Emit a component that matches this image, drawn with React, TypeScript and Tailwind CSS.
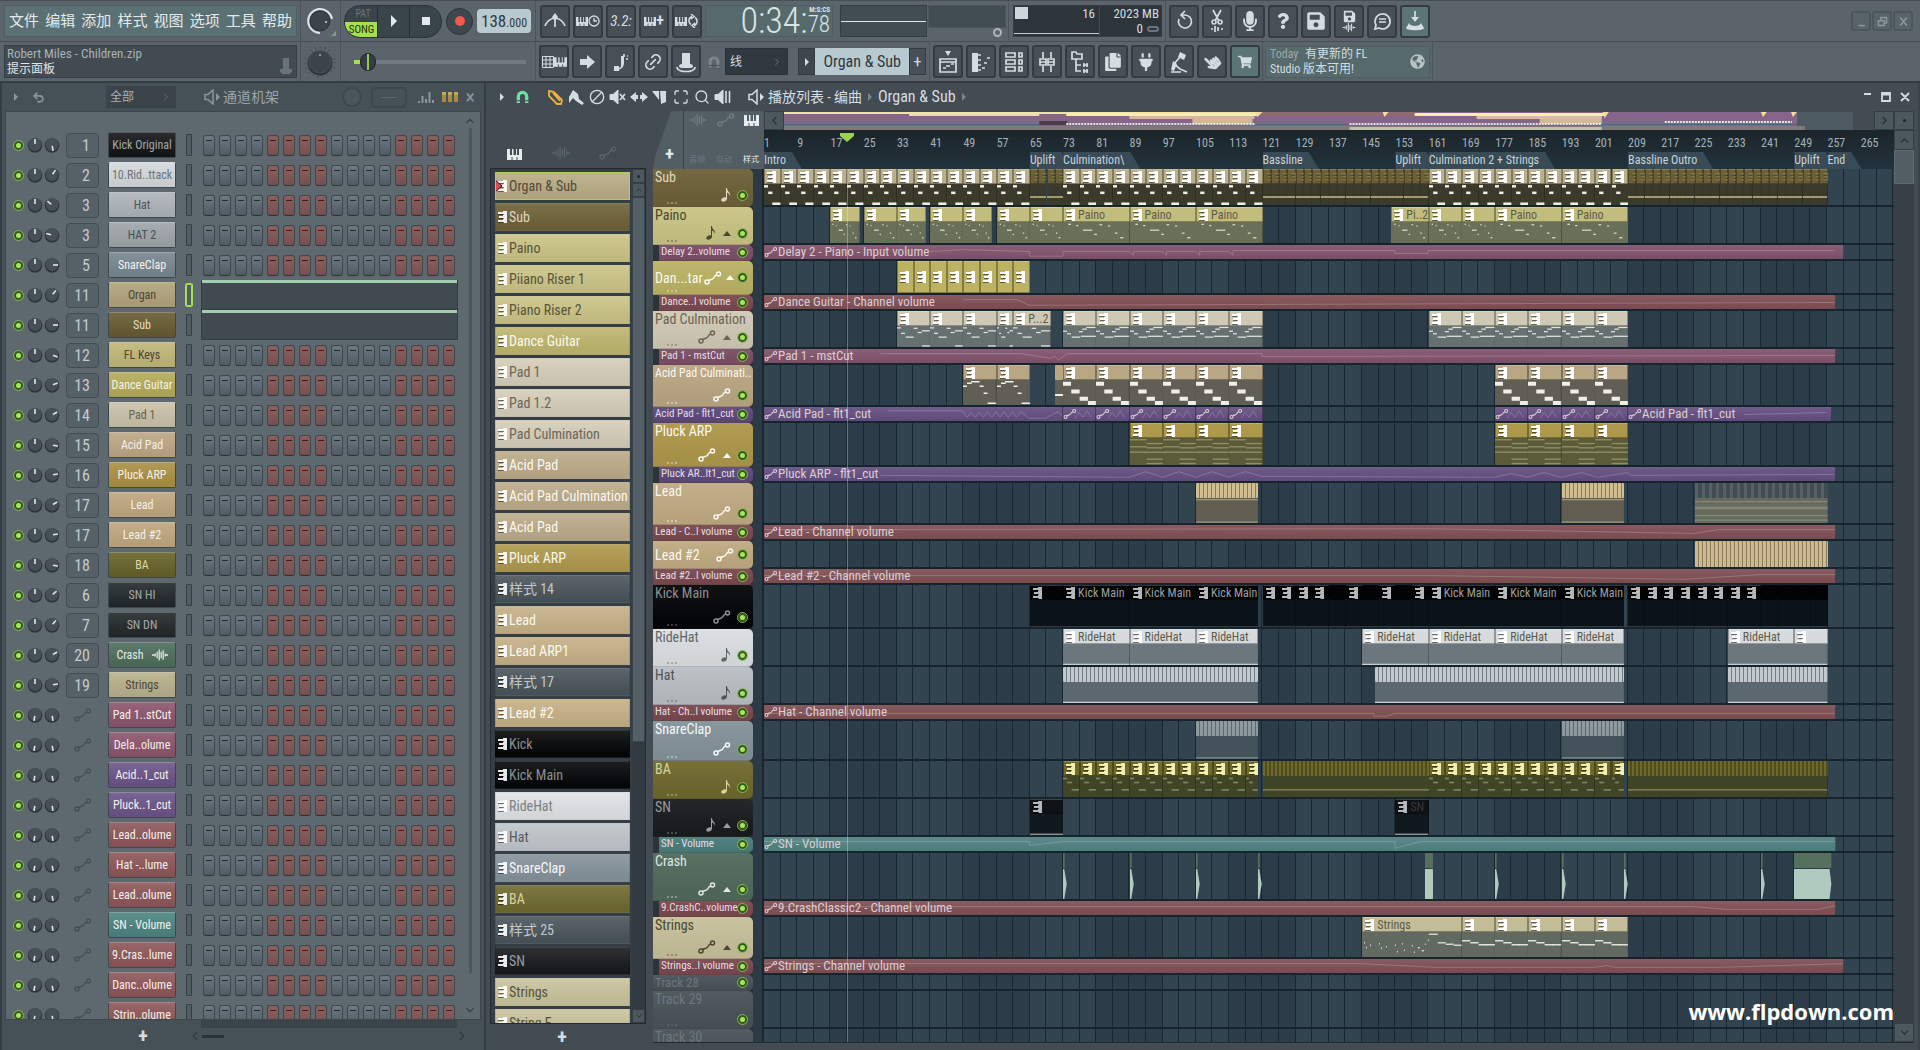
import React from "react";
import {
  Ban,
  ChevronDown,
  ChevronLeft,
  ChevronRight,
  ChevronUp,
  Link2,
  Maximize,
  Search,
  Undo2,
} from "lucide-react";
import {
  FaCopy,
  FaGlobeAmericas,
  FaHandPointer,
  FaMicrophone,
  FaPlug,
  FaQuestion,
  FaSave,
  FaShoppingCart,
} from "react-icons/fa";

const BARS = 272;
const pct = (bars: number) => `${(bars / BARS) * 100}%`;

/* ---------- small drawings ---------- */

const PatternIcon = ({ className = "" }) => (
  <svg viewBox="0 0 9 12" className={`h-3 w-[9px] shrink-0 ${className}`} fill="currentColor">
    <path d="M5 0h4v12H5zM0 1h5v2H0zM1 5h4v2H1zM0 9h5v2H0z" />
    <path d="M0 3.500h6M1 7.500h5M0 11.500h6" stroke="#000" strokeOpacity=".5" strokeWidth="1" />
  </svg>
);

const LinkDots = ({ className = "" }) => (
  <svg viewBox="0 0 18 14" className={`h-[14px] w-[18px] shrink-0 ${className}`} fill="none" stroke="currentColor" strokeWidth="1.500">
    <circle cx="3" cy="11" r="2" />
    <circle cx="14.500" cy="3" r="2" />
    <path d="M4.500 9.500C7 8 9 9 10 6.500s2-2 3-2.500" />
  </svg>
);

const NoteIcon = ({ className = "" }) => (
  <svg viewBox="0 0 10 14" className={`h-[14px] w-[10px] shrink-0 ${className}`} fill="currentColor">
    <ellipse cx="3" cy="11.500" rx="2.800" ry="2" transform="rotate(-25 3 11.500)" />
    <path d="M5 11V0h1c0 4 4 4 3 8-.5-2-1.500-3-3-3.500V11z" />
  </svg>
);

const Piano = ({ className = "" }) => (
  <svg viewBox="0 0 15 11" className={`shrink-0 ${className}`} fill="currentColor">
    <path d="M0 0h3v6h2V0h1.500v6H9V0h1v6h2V0h3v11h-4.500V8h-1v3h-4V8h-1v3H0z" />
  </svg>
);

const Wave = ({ className = "" }) => (
  <svg viewBox="0 0 20 14" className={`shrink-0 ${className}`} fill="none" stroke="currentColor" strokeWidth="1.600">
    <path d="M0 7h3M4 5v4M6.500 3v8M9 0v14M11.500 3v8M14 1v12M16.500 5v4M17 7h3" />
  </svg>
);

const Speaker = ({ className = "" }) => (
  <svg viewBox="0 0 18 16" className={`h-4 w-[18px] shrink-0 ${className}`} fill="none" stroke="currentColor" strokeWidth="1.500">
    <path d="M1 5.500h3L9 1v14l-5-4.500H1z" />
    <path d="M12 4l4 4-4 4z" fill="currentColor" stroke="none" />
  </svg>
);

const SpeakerSolid = ({ extra }: { extra: string }) => (
  <svg viewBox="0 0 18 16" className="h-4 w-[18px]" fill="currentColor" stroke="currentColor">
    <path d="M1 5.500h3L9 1v14l-5-4.500H1z" />
    <path d={extra} fill="none" strokeWidth="1.600" />
  </svg>
);

const Magnet = ({ className = "" }) => (
  <svg viewBox="0 0 14 15" className={`shrink-0 ${className}`} fill="none" stroke="currentColor" strokeWidth="3.500">
    <path d="M2.500 14V7a4.500 4.500 0 0 1 9 0v7" />
    <path d="M0 11.500h14" stroke="#434d53" strokeWidth="1" />
  </svg>
);

const Led = () => (
  <span className="h-[9px] w-[9px] shrink-0 rounded-full border-2 border-[#35591c] bg-[#a4e85c] outline outline-[#83b556]" />
);

const Knob = ({ angle }: { angle: number }) => (
  <svg viewBox="0 0 16 16" className="h-4 w-4 shrink-0">
    <circle cx="8" cy="8.500" r="7.300" fill="#2d353a" />
    <circle cx="8" cy="7.500" r="6.500" fill="#465056" />
    <path d="M8 7V2" stroke="#dfe5e8" strokeWidth="1.600" transform={`rotate(${angle} 8 8)`} />
  </svg>
);

const ToolButton = ({ label, lit = false, children }: { label: string; lit?: boolean; children: React.ReactNode }) => (
  <button
    aria-label={label}
    className={`flex h-[33px] w-[30px] shrink-0 items-center justify-center rounded-[3px] border-2 border-[#333c42] text-[#d6dde0] ${
      lit ? "bg-[#5b7577]" : "bg-[#465056]"
    }`}
  >
    {children}
  </button>
);

const Draw = ({ d, solid = "" }: { d: string; solid?: string }) => (
  <svg viewBox="0 0 22 24" className="h-6 w-[22px] shrink-0" fill="none" stroke="currentColor" strokeWidth="1.700">
    <path d={d} />
    <path d={solid} fill="currentColor" stroke="none" />
  </svg>
);

/* ---------- top toolbar ---------- */

const menus = ["文件", "编辑", "添加", "样式", "视图", "选项", "工具", "帮助"];

const TopRow = () => (
  <div className="flex h-[41px] items-center border-b border-[#465056] pl-1">
    <nav className="flex h-8 w-[293px] shrink-0 items-center justify-between border border-[#4d5f62] bg-[#5b7073] px-1">
      {menus.map((m) => (
        <button key={m} className="text-[15px] text-[#e3eaec]">
          {m}
        </button>
      ))}
    </nav>
    <div className="ml-[3px] flex h-full w-[41px] items-center justify-center border-x border-[#4a545a]">
      <svg viewBox="0 0 32 32" className="h-8 w-8">
        <circle cx="15" cy="16" r="10" fill="#3b444a" stroke="#2c3439" />
        <path d="M15 28A12 12 0 1 1 27 14" fill="none" stroke="#dce5e9" strokeWidth="2" />
        <circle cx="21" cy="17" r="1" fill="#cfd6d9" />
        <path d="M31 26v5h-5z" fill="#7f9c86" />
      </svg>
    </div>
    <div className="ml-[3px] flex h-[33px] w-[98px] shrink-0 overflow-hidden rounded-[16px] border border-[#2c3439] bg-[#3a444b]">
      <div className="flex w-[33px] flex-col border-r border-[#262e33]">
        <button className="h-4 pl-1 text-[10px] leading-4 text-[#69747a]">PAT</button>
        <button className="h-[15px] bg-[#a5e04d] pl-px text-[11px] leading-[15px] text-[#26330f]">SONG</button>
      </div>
      <button aria-label="Play" className="flex flex-1 items-center justify-center border-r border-[#262e33]">
        <svg viewBox="0 0 6 12" className="h-3 w-[6px]" fill="#e2e9ec"><path d="M0 0l6 6-6 6z" /></svg>
      </button>
      <button aria-label="Stop" className="flex flex-1 items-center justify-center">
        <span className="h-2 w-2 bg-[#e2e9ec]" />
      </button>
    </div>
    <button aria-label="Record" className="ml-1 flex h-[27px] w-[27px] shrink-0 items-center justify-center rounded-full border border-[#2c3439] bg-[#3e474d]">
      <span className="h-[10px] w-[10px] rounded-full bg-[#f0594d]" />
    </button>
    <div className="ml-1 flex h-6 w-[54px] shrink-0 items-baseline rounded-[4px] bg-[#b9c9d0] pl-1 text-[#2f3a40]">
      <span className="text-[17px] leading-6">138</span>
      <span className="text-[12px]">.000</span>
    </div>
    <div className="ml-1 flex h-full items-center gap-[3px] border-l border-[#4a545a] pl-1">
      <ToolButton label="Metronome"><Draw d="M11 7v11M10 9C6 10 3 12 1 17M12 9c4 1 7 3 9 8" solid="M11 4l3 4-3 4-3-4z" /></ToolButton>
      <ToolButton label="Wait for input">
        <Piano className="h-[11px] w-3" />
        <svg viewBox="0 0 12 12" className="h-3 w-3" fill="none" stroke="currentColor" strokeWidth="1.300"><circle cx="6" cy="6" r="5" /><path d="M6 3v3h3" /></svg>
      </ToolButton>
      <ToolButton label="Countdown"><span className="text-[15px] italic">3.2:</span></ToolButton>
      <ToolButton label="Blend notes"><Piano className="h-[11px] w-3" /><span className="text-base font-bold leading-4">+</span></ToolButton>
      <ToolButton label="Loop record">
        <Piano className="h-[11px] w-3" />
        <svg viewBox="0 0 12 14" className="h-[14px] w-3" fill="none" stroke="currentColor" strokeWidth="1.500"><path d="M5 2.500a4.500 4.500 0 0 0-1 8M7 11.500a4.500 4.500 0 0 0 1-8M4 0l3 2.500L4 5M8 9l-3 2.500L8 14" /></svg>
      </ToolButton>
    </div>
    <div className="ml-[3px] flex h-8 w-[128px] shrink-0 items-center justify-end border border-[#4d5f62] bg-[#566a6c] pr-[2px] text-[#d9e4e6]">
      <span className="text-[36px] font-light leading-8">0:34:</span>
      <div className="flex flex-col">
        <span className="text-right text-[7px] font-bold leading-[8px]">M:S:CS</span>
        <span className="text-[23px] font-light leading-[22px]">78</span>
      </div>
    </div>
    <div className="ml-[7px] flex h-8 w-[87px] shrink-0 items-center border border-[#343d43] bg-[#424c53]">
      <span className="h-px w-full bg-[#dfe5e7]" />
    </div>
    <div className="ml-px flex h-8 w-[78px] shrink-0 flex-col items-end">
      <div className="h-[23px] w-full border border-[#4b555b] bg-[#424c53]" />
      <span className="mr-1 h-[9px] w-[9px] rounded-full border-2 border-[#aeb6ba]" />
    </div>
    <div className="ml-[2px] flex h-full items-center border-l border-[#4a545a] pl-1">
      <div className="flex h-8 w-[149px] border border-[#343d43] bg-[#2d353b] text-[13px] text-[#d6dde0]">
        <div className="relative flex w-[86px] justify-between border-r border-[#434c52] pl-px pr-1">
          <span className="mt-px h-3 w-[13px] bg-[#cfd6d9]" />
          <span className="leading-4">16</span>
          <span className="absolute bottom-[2px] left-0 h-px w-full bg-[#c6cdd0]" />
        </div>
        <div className="flex flex-1 flex-col items-end pr-[2px]">
          <span className="leading-4">2023 MB</span>
          <span className="flex items-center gap-1 leading-[14px]">0<i className="h-[6px] w-3 rounded-full border-2 border-[#6b757b]" /></span>
        </div>
      </div>
    </div>
    <div className="ml-[3px] flex h-full items-center gap-[3px] border-l border-[#4a545a] pl-[3px]">
      <ToolButton label="Undo"><Draw d="M9 6h3a6.500 6.500 0 1 1-6 4M12 2L8 6l4 4" /></ToolButton>
      <ToolButton label="Cut"><Draw d="M7 1l6 11M15 1L9 12M8 11a2 2 0 1 0 .1 0M14 11a2 2 0 1 0 .1 0M5 20h2M9 17v6M12 18v4M15 20h2" /></ToolButton>
      <ToolButton label="Record audio"><FaMicrophone size={20} /></ToolButton>
      <ToolButton label="Help"><FaQuestion size={16} /></ToolButton>
      <ToolButton label="Save"><FaSave size={20} /></ToolButton>
      <ToolButton label="Save as">
        <span className="flex flex-col items-center"><FaSave size={13} /><Wave className="h-[9px] w-[14px]" /></span>
      </ToolButton>
      <ToolButton label="Comments"><Draw d="M4 20l1-4a7.500 7.500 0 1 1 3 3zM8 10h7M8 13h7" /></ToolButton>
      <ToolButton label="Download" lit><Draw d="M11 2v9" solid="M7 8h8l-4 5zM5 14l-3 5c0 3 18 3 18 0l-3-5c-1 4-11 4-12 0z" /></ToolButton>
    </div>
    <div className="ml-auto mr-[7px] flex gap-px">
      {["M4 13h8", "M3 7h7v6H3zM6 7V3h7v7h-3", "M4 3l8 10M12 3L4 13"].map((d) => (
        <button key={d} aria-label="Window" className="flex h-5 w-5 items-center justify-center rounded-[3px] border-2 border-[#4c565c] bg-[#59636a] text-[#8d969b]">
          <svg viewBox="0 0 16 16" className="h-[13px] w-[13px]" fill="none" stroke="currentColor" strokeWidth="1.800"><path d={d} /></svg>
        </button>
      ))}
    </div>
  </div>
);

const SecondRow = () => (
  <div className="flex h-[41px] items-center border-b-2 border-[#343d43] pl-1">
    <div className="flex h-[33px] w-[293px] shrink-0 items-end justify-between border border-[#353e44] bg-[#424b51] pb-px pl-[2px] pr-1">
      <div>
        <p className="text-[13px] leading-4 text-[#a9b2b6]">Robert Miles - Children.zip</p>
        <p className="text-[12px] leading-[14px] text-[#e0e6e8]">提示面板</p>
      </div>
      <svg viewBox="0 0 12 16" className="mb-[2px] h-4 w-3" fill="#69737a"><path d="M3 0h6v11h3v3l-3 2H3l-3-2v-3h3z" /></svg>
    </div>
    <div className="ml-[3px] flex h-full w-[41px] items-center justify-center border-x border-[#4a545a]">
      <svg viewBox="0 0 34 34" className="h-[34px] w-[34px]">
        <circle cx="16" cy="17" r="15" fill="none" stroke="#3f494f" strokeDasharray="1 4" strokeWidth="1.500" />
        <circle cx="16" cy="18" r="12.500" fill="#2d353a" />
        <circle cx="16" cy="17" r="11" fill="#3b444a" stroke="#465056" />
        <circle cx="16" cy="10" r="1" fill="#a9b2b6" />
      </svg>
    </div>
    <div className="flex h-full w-[195px] items-center border-r border-[#4a545a] pl-[13px]">
      <div className="relative h-1 w-[172px] bg-[#6f797f]">
        <span className="absolute left-0 h-1 w-2 bg-[#a5e04d]" />
        <span className="absolute -top-[7px] left-[6px] flex h-[18px] w-4 justify-center rounded-full border border-[#21282c] bg-[#343d43]">
          <i className="h-4 w-[2px] bg-[#97c850]" />
        </span>
      </div>
    </div>
    <div className="flex gap-[3px] pl-[3px]">
      <ToolButton label="Typing keyboard">
        <svg viewBox="0 0 12 12" className="h-3 w-3" fill="none" stroke="currentColor"><path d="M.5.500h11v11H.5zM.5 4h11M.5 8h11M4 0v12M8 0v12" /></svg>
        <Piano className="h-3 w-[13px]" />
      </ToolButton>
      <ToolButton label="Step"><Draw d="" solid="M4 9h7V5l8 7-8 7v-4H4z" /></ToolButton>
      <ToolButton label="Slide"><Draw d="M6 19c5 1 9-2 8-9M15 4v3M18 6h1M17 9h2" solid="M5 16h5v5H5zM12 6h3v7l-3 4z" /></ToolButton>
      <ToolButton label="Link"><Link2 size={20} className="-rotate-45" /></ToolButton>
      <ToolButton label="Multilink"><Draw d="M2 17c0 6 18 6 18 0" solid="M7 3h8v11c4 0 4 4 0 4H7c-4 0-4-4 0-4z" /></ToolButton>
    </div>
    <Magnet className="ml-[7px] h-[14px] w-3 text-[#7d878c]" />
    <button className="ml-[5px] flex h-[27px] w-[63px] items-center justify-between border border-[#2b3338] bg-[#30393f] px-1 text-[12px] text-[#d6dde0]">
      线<ChevronRight size={12} className="text-[#6b757b]" />
    </button>
    <button aria-label="Previous pattern" className="ml-[10px] flex h-[27px] w-[17px] items-center justify-center border border-[#333c42] bg-[#3d474d]">
      <svg viewBox="0 0 4 8" className="h-2 w-1" fill="#d6dde0"><path d="M0 0l4 4-4 4z" /></svg>
    </button>
    <div className="flex h-[27px] w-[94px] items-center justify-end bg-[#b9c9d0] pr-2 text-[16px] text-[#2f3a40]">Organ &amp; Sub</div>
    <button className="h-[27px] w-[17px] border border-[#333c42] bg-[#465056] text-[16px] leading-6 text-[#d6dde0]">+</button>
    <div className="ml-[3px] flex h-full items-center gap-[3px] border-l border-[#4a545a] pl-[3px]">
      <ToolButton label="Playlist"><Draw d="M3 9h16v13H3zM3 12h16M6 18h3M9 16h4M14 14h3" solid="M8 1h6l-3 5z" /></ToolButton>
      <ToolButton label="Piano roll"><Draw d="M7 5h4M7 10h4M7 15h4M7 20h4M12 18h3M14 13h3M17 8h3" solid="M2 3h6v19H2z" /></ToolButton>
      <ToolButton label="Channel rack"><Draw d="M3 3h9v4H3zM3 10h9v4H3zM3 17h9v4H3zM16 3h3v4h-3zM16 10h3v4h-3zM16 17h3v4h-3z" /></ToolButton>
      <ToolButton label="Mixer"><Draw d="M7 2v6M7 16v6M15 2v6M15 16v6M4 9h6v6H4zM12 9h6v6h-6zM4 12h6M12 12h6" /></ToolButton>
      <ToolButton label="Browser"><Draw d="M3 2h4l1 2h5v5H3zM7 9v12h5M7 15h5M14 15h5M14 21h5M15 13v4M18 13v4M15 19v4M18 19v4" /></ToolButton>
      <ToolButton label="Project"><FaCopy size={18} /></ToolButton>
      <ToolButton label="Plugins"><FaPlug size={18} /></ToolButton>
      <ToolButton label="Performance"><Draw d="M12 7l-6 7 6 5M3 22h10M12 19l7 3" solid="M12 2l6 3-2 5-6-3zM5 11l4 3-3 7-3-1z" /></ToolButton>
      <ToolButton label="Touch"><FaHandPointer size={16} className="-rotate-45" /></ToolButton>
      <ToolButton label="Shop" lit><FaShoppingCart size={14} /></ToolButton>
    </div>
    <div className="ml-[2px] flex h-full items-center border-x border-[#4a545a] px-[2px]">
      <div className="flex h-8 w-[165px] items-center justify-between border border-[#4b5f60] bg-[#566a6c] pl-1 pr-1">
        <p className="text-[12px] leading-[15px] text-[#d3dddf]">
          <span className="mr-1 text-[#9aa9ab]">Today</span> 有更新的 FL<br />Studio 版本可用!
        </p>
        <FaGlobeAmericas size={15} className="text-[#b9c4c6]" />
      </div>
    </div>
  </div>
);

/* ---------- channel rack ---------- */

const dark = "text-[#4b4636]";
const light = "text-[#f3f1ea]";
const red = "bg-[#8d5558]";

const channels: [string, number | null, string, string, number][] = [
  ["Kick Original", 1, "bg-[#121416]", "text-[#a4a9ab]", 170],
  ["10.Rid..ttack", 2, "bg-[#d3d8da]", "text-[#6b7479]", 35],
  ["Hat", 3, "bg-[#adb3b7]", "text-[#4f5558]", -50],
  ["HAT 2", 3, "bg-[#9da4a8]", "text-[#4a5053]", -75],
  ["SnareClap", 5, "bg-[#76858e]", light, 90],
  ["Organ", 11, "bg-[#b0a27b]", dark, 40],
  ["Sub", 11, "bg-[#675a32]", "text-[#e2dcc6]", 90],
  ["FL Keys", 12, "bg-[#beb676]", dark, 110],
  ["Dance Guitar", 13, "bg-[#b3aa58]", light, 70],
  ["Pad 1", 14, "bg-[#c9c0a8]", "text-[#65604f]", 60],
  ["Acid Pad", 15, "bg-[#bca583]", light, 100],
  ["Pluck ARP", 16, "bg-[#a98f43]", light, 80],
  ["Lead", 17, "bg-[#bda67d]", light, 60],
  ["Lead #2", 17, "bg-[#bda67d]", light, 80],
  ["BA", 18, "bg-[#666128]", "text-[#dcd7a8]", 100],
  ["SN HI", 6, "bg-[#22272a]", "text-[#a4a9ab]", 50],
  ["SN DN", 7, "bg-[#22272a]", "text-[#a4a9ab]", 40],
  ["Crash", 20, "bg-[#4d6c5c]", "text-[#e1ebe5]", 60],
  ["Strings", 19, "bg-[#b7af8b]", dark, 80],
  ["Pad 1..stCut", null, "bg-[#8a546b]", light, 170],
  ["Dela..olume", null, "bg-[#8a546b]", light, 170],
  ["Acid..1_cut", null, "bg-[#6a5387]", light, 170],
  ["Pluck..1_cut", null, "bg-[#6a5387]", light, 170],
  ["Lead..olume", null, red, light, 170],
  ["Hat -..lume", null, red, light, 170],
  ["Lead..olume", null, red, light, 170],
  ["SN - Volume", null, "bg-[#4c837f]", light, 170],
  ["9.Cras..lume", null, red, light, 170],
  ["Danc..olume", null, red, light, 170],
  ["Strin..olume", null, red, light, 170],
];

const Steps = () => (
  <div className="flex gap-1">
    {Array.from({ length: 16 }, (_, i) => (
      <button
        key={i}
        aria-label={`Step ${i + 1}`}
        className={`flex h-[21px] w-3 justify-center rounded-[3px] border border-[#3d464b] border-b-[#2e363b] bg-gradient-to-b pt-1 ${
          i % 8 < 4 ? "from-[#6d7981] to-[#505b63]" : "from-[#8b605f] to-[#774f50]"
        }`}
      >
        <i className={`h-px w-[6px] ${i % 8 < 4 ? "bg-[#232b30]" : "bg-[#3c1d1f]"}`} />
      </button>
    ))}
  </div>
);

const ChannelRack = () => (
  <section className="flex w-[486px] shrink-0 flex-col border-x-2 border-[#343d43] bg-[#465157] px-[3px]">
    <header className="flex h-7 shrink-0 items-center text-[#8b969b]">
      <svg viewBox="0 0 4 8" className="ml-[9px] h-2 w-1" fill="currentColor"><path d="M0 0l4 4-4 4z" /></svg>
      <Undo2 size={13} strokeWidth={3} className="ml-[14px]" />
      <button className="ml-[61px] flex h-[22px] w-[70px] items-center justify-between bg-[#3a444a] pl-1 pr-1 text-[12px] text-[#aab3b7]">
        全部<ChevronRight size={12} className="text-[#667177]" />
      </button>
      <Speaker className="ml-[28px]" />
      <h2 className="ml-px text-[14px] text-[#9ba5aa]">通道机架</h2>
      <span className="ml-auto h-5 w-5 rounded-full border-2 border-[#3d474d] bg-[#4b565c]" />
      <span className="ml-[9px] flex h-[21px] w-9 items-center justify-center rounded-[5px] border-2 border-[#3d474d]">
        <i className="h-px w-4 bg-[#5b666c]" />
      </span>
      <svg viewBox="0 0 16 12" className="ml-[11px] h-3 w-4" stroke="currentColor" strokeWidth="2"><path d="M1 12v-2M4.500 12V5M8 12V8M11.500 12V1M15 12v-3" /></svg>
      <span className="ml-2 flex gap-[2px]">
        {[0, 1, 2].map((i) => <i key={i} className="h-[10px] w-1 border-t-[3px] border-[#c9a650] bg-[#a88a42]" />)}
      </span>
      <span className="ml-2 mr-[6px] text-[20px] leading-5">×</span>
    </header>
    <div className="flex min-h-0 flex-1 border border-[#3c464c] bg-[#5e696f]">
      <div className="min-h-0 flex-1 overflow-hidden pt-[18px]">
        {channels.map(([name, num, bg, text, angle], i) => (
          <div key={i} className="flex h-[30px] items-center">
            <span className="ml-[8px] flex"><Led /></span>
            <span className="ml-1 flex gap-px"><Knob angle={num ? 0 : 190} /><Knob angle={angle} /></span>
            {num ? (
              <span className="ml-[6px] h-[25px] w-[33px] rounded-[4px] border border-[#434d53] bg-[#566067] pr-2 text-right text-[16px] leading-[23px] text-[#c3cbcf]">
                {num}
              </span>
            ) : (
              <span className="ml-[6px] flex w-[33px] justify-center"><LinkDots className="text-[#465056]" /></span>
            )}
            <button className={`ml-[9px] flex h-[26px] w-[68px] items-center justify-center gap-2 whitespace-nowrap rounded-[2px] border border-[#3e474c] border-t-white/30 bg-gradient-to-b from-white/10 to-black/5 text-[12px] ${bg} ${text}`}>
              {name}
              {name === "Crash" && <Wave className="h-3 w-4" />}
            </button>
            <span className={`ml-[10px] h-[22px] w-[6px] rounded-[1px] border ${name === "Organ" ? "border-[#a5e04d] outline outline-[#a5e04d]" : "border-[#353e43]"} bg-[#535e64]`} />
            {name === "Organ" || name === "Sub" ? (
              <span className="ml-[9px] h-[30px] w-[257px] border border-[#333c42] border-t-0 bg-[#414a51]">
                <i className="block h-[3px] bg-[#a4cdb2]" />
              </span>
            ) : (
              <span className="ml-[11px]"><Steps /></span>
            )}
          </div>
        ))}
      </div>
      <div className="flex w-[20px] flex-col items-center py-[2px] text-[#39434a]">
        <ChevronUp size={14} />
        <span className="mb-[30px] w-[3px] flex-1 rounded bg-[#4c565c]" />
        <ChevronDown size={14} />
      </div>
    </div>
    <footer className="flex h-[30px] shrink-0 flex-col pl-[184px] pr-[12px]">
      <div className="mx-[12px] h-2 bg-[#3a444a]" />
      <div className="flex items-center text-[#30393f]">
        <button className="-ml-[54px] mr-[37px] h-4 w-4 text-[20px] font-bold leading-[14px] text-[#d6dde0]">+</button>
        <ChevronLeft size={14} />
        <span className="h-[3px] w-[22px] bg-[#2b3338]" />
        <ChevronRight size={14} className="ml-auto" />
      </div>
    </footer>
  </section>
);

/* ---------- picker ---------- */

const picker: [string, string, string][] = [
  ["Organ & Sub", "bg-[#b9ac85]", "text-[#4f4a38]"],
  ["Sub", "bg-[#6e6139]", "text-[#ded7bf]"],
  ["Paino", "bg-[#cac486]", "text-[#57533a]"],
  ["Piiano Riser 1", "bg-[#cac486]", "text-[#57533a]"],
  ["Piano Riser 2", "bg-[#cac486]", "text-[#57533a]"],
  ["Dance Guitar", "bg-[#bdb56c]", "text-[#fbfae9]"],
  ["Pad 1", "bg-[#d4cdb8]", "text-[#6b6657]"],
  ["Pad 1.2", "bg-[#d4cdb8]", "text-[#6b6657]"],
  ["Pad Culmination", "bg-[#d4cdb8]", "text-[#6b6657]"],
  ["Acid Pad", "bg-[#bcaa89]", "text-[#fbf8f1]"],
  ["Acid Pad Culmination", "bg-[#bcaa89]", "text-[#fbf8f1]"],
  ["Acid Pad", "bg-[#bcaa89]", "text-[#fbf8f1]"],
  ["Pluck ARP", "bg-[#ae984c]", "text-[#fbf8f1]"],
  ["样式 14", "bg-[#49545a]", "text-[#c0c8cb]"],
  ["Lead", "bg-[#c5b086]", "text-[#fbf8f1]"],
  ["Lead ARP1", "bg-[#c5b086]", "text-[#fbf8f1]"],
  ["样式 17", "bg-[#49545a]", "text-[#c0c8cb]"],
  ["Lead #2", "bg-[#c5b086]", "text-[#fbf8f1]"],
  ["Kick", "bg-[#040506]", "text-[#8b8f92]"],
  ["Kick Main", "bg-[#040506]", "text-[#8b8f92]"],
  ["RideHat", "bg-[#dfe2e5]", "text-[#7b8084]"],
  ["Hat", "bg-[#bfc5ca]", "text-[#565c60]"],
  ["SnareClap", "bg-[#85929a]", "text-[#f6f9fa]"],
  ["BA", "bg-[#6e692e]", "text-[#d8d39c]"],
  ["样式 25", "bg-[#49545a]", "text-[#c0c8cb]"],
  ["SN", "bg-[#17191b]", "text-[#989da0]"],
  ["Strings", "bg-[#c8c29c]", "text-[#57533a]"],
  ["String F", "bg-[#c8c29c]", "text-[#57533a]"],
];

const ScrollButton = ({ label, children }: { label: string; children?: React.ReactNode }) => (
  <button aria-label={label} className="flex w-full flex-1 items-center justify-center border border-[#353e43] bg-[#4d575e] text-[#272f34]">
    {children}
  </button>
);

const Dot = () => <i className="h-[3px] w-[3px] rounded-full bg-[#20282d]" />;

const Picker = () => (
  <aside className="flex w-[156px] shrink-0 flex-col">
    <div className="flex h-[57px] items-end pb-2 pl-[17px] text-[#59646a]">
      <Piano className="h-[11px] w-[15px] text-[#e6ebed]" />
      <Wave className="ml-[30px] h-[14px] w-[18px]" />
      <LinkDots className="ml-[29px]" />
    </div>
    <div className="flex min-h-0 flex-1 overflow-hidden border border-[#232b30] bg-[#353e44]">
      <ul className="min-h-0 w-[141px] overflow-hidden pl-1 pt-[3px]">
        {picker.map(([name, bg, text], i) => (
          <li
            key={i}
            className={`relative mb-[3px] flex h-7 w-[135px] items-center gap-[2px] overflow-hidden whitespace-nowrap border bg-gradient-to-b from-white/10 to-black/5 pl-[2px] text-[14px] ${
              i === 0 ? "border-[#a9d05a]" : "border-black/10 border-t-white/20"
            } ${bg} ${text}`}
          >
            {i === 0 && (
              <svg viewBox="0 0 8 14" className="absolute -left-px z-10 h-[14px] w-2"><path d="M0 1l7 6-7 6z" fill="#e2485a" stroke="#3a1a1e" /></svg>
            )}
            <PatternIcon className="text-white/90" />
            {name}
          </li>
        ))}
      </ul>
      <div className="flex flex-1 flex-col">
        <div className="flex h-[14px]"><ScrollButton label="Options"><Dot /></ScrollButton></div>
        <div className="flex h-[14px]"><ScrollButton label="Up"><ChevronUp size={10} /></ScrollButton></div>
        <div className="flex-[65] border border-[#39434a] bg-[#555f67]" />
        <div className="flex-[32] bg-[#303a40]" />
        <div className="flex h-[14px]"><ScrollButton label="Down"><ChevronDown size={10} /></ScrollButton></div>
      </div>
    </div>
    <button className="h-[26px] w-[144px] shrink-0 text-center text-[20px] font-bold leading-5 text-[#d6dde0]">+</button>
  </aside>
);

/* ---------- playlist data ---------- */

type Note = [number, number, number];
type Clip = {
  from: number;
  to: number;
  label?: string;
  icon?: boolean;
  look: keyof typeof looks;
};

const subNotes: Note[] = [[0, 5, 24], [25, 36, 26], [50, 88, 50]];
const pianoNotes: Note[] = [[8, 8, 4], [20, 14, 3], [30, 36, 14], [47, 56, 4], [55, 10, 4], [68, 16, 3], [78, 50, 4], [86, 72, 5]];
const padNotes: Note[] = [[0, 6, 12], [12, 32, 12], [26, 50, 24], [50, 8, 12], [62, 28, 12], [75, 20, 25], [75, 92, 25]];
const padLate: Note[] = [[0, 22, 12], [12, 34, 12], [26, 50, 26], [48, 24, 12], [58, 12, 14], [70, 4, 28], [54, 46, 46]];
const acidNotes: Note[] = [[0, 7, 24], [25, 38, 25], [50, 67, 25], [75, 84, 25]];
const acidSoft: Note[] = [[0, 22, 12], [12, 10, 14], [24, 4, 26], [50, 22, 12], [62, 50, 12], [74, 90, 26]];
const baNotes: Note[] = [[0, 8, 24], [25, 27, 30], [52, 62, 44]];
const pluckNotes: Note[] = [[0, 4, 50], [0, 30, 50], [0, 50, 100], [50, 18, 50], [50, 34, 50], [50, 76, 50], [50, 92, 50]];
const stringNotes: Note[] = [[0, 32, 25], [25, 40, 25], [50, 48, 25], [72, 48, 28]];
const stringIntro: Note[] = [
  [2, 40, 1], [4, 60, 1], [8, 50, 1], [17, 44, 1], [19, 62, 1], [24, 56, 1], [33, 50, 1], [35, 76, 1], [40, 44, 1], [42, 70, 1],
  [50, 52, 1], [52, 78, 1], [56, 60, 2], [60, 72, 2], [63, 46, 1], [66, 30, 1], [67, 6, 9], [76, 40, 8], [84, 46, 8], [92, 50, 8],
];

// head, body and note classes for every kind of clip
const looks = {
  sub: ["bg-[#bbb08b]", "bg-[#3b3b2d]", "fill-[#eeeee2]", subNotes, 12],
  subDark: ["bg-[#6c6136] border-[#4b4428]", "bg-[#3b3b2d]", "fill-[#b5ad7a]", [[0, 58, 100]], 8],
  piano: ["bg-[#c3bd7d]", "bg-[#68705a]", "fill-[#dcdcba]", pianoNotes, 6],
  guitar: ["bg-[#bbb361]", "", "", [], 0],
  pad: ["bg-[#cfc8b5]", "bg-[#667070]", "fill-[#dfe3df]", padNotes, 6],
  padLate: ["bg-[#cfc8b5]", "bg-[#667070]", "fill-[#dfe3df]", padLate, 6],
  acid: ["bg-[#b9a684]", "bg-[#605f56]", "fill-[#efefe9]", acidNotes, 16],
  acidSoft: ["bg-[#b9a684]", "bg-[#605f56]", "fill-[#efefe9]", acidSoft, 6],
  acidPickup: ["bg-[#b9a684]", "bg-[#605f56]", "fill-[#efefe9]", [[0, 56, 100]], 8],
  pluck: ["bg-[#ae984c]", "bg-[#5b5b3a]", "fill-[#8e9065]", pluckNotes, 5],
  lead: ["bg-[repeating-linear-gradient(90deg,#d0bd92_0_3px,#8a7d5e_3px_4px)]", "bg-[#625f52]", "fill-[#a2977c]", [[0, 4, 100], [0, 94, 100]], 5],
  leadFull: ["bg-[repeating-linear-gradient(90deg,#cdb98d_0_3px,#8a7d5e_3px_4px)]", "", "", [], 0],
  leadDark: ["bg-[repeating-linear-gradient(90deg,#566167_0_3px,#414d53_3px_7px)]", "bg-[#666a5e]", "fill-[#858877]", [[0, 12, 100], [0, 34, 100], [0, 40, 100], [0, 68, 100], [0, 86, 100]], 5],
  kick: ["bg-[#020303] border-[#020303]", "bg-[#0b1318]", "fill-[#3b4348]", [[0, 97, 100]], 4],
  ride: ["bg-[#d7dbde]", "bg-[#6b777d]", "fill-[#c9ced1]", [[0, 94, 100]], 6],
  hat: ["bg-[repeating-linear-gradient(90deg,#c2c8cc_0_3px,#727c82_3px_4px)]", "bg-[#5c686f]", "fill-[#c9ced1]", [[0, 94, 100]], 6],
  snare: ["bg-[repeating-linear-gradient(90deg,#8f9a9f_0_3px,#5b676e_3px_4px)]", "bg-[#43525a]", "fill-[#7d8a90]", [[0, 92, 100]], 6],
  ba: ["bg-[#6e6a2b] border-[#4b491f]", "bg-[#414527]", "fill-[#82835a]", baNotes, 8],
  baDark: ["bg-[repeating-linear-gradient(90deg,#6e6a2b_0_2px,#4f4d20_2px_4px)]", "bg-[#414527]", "fill-[#7b7a4c]", [[0, 62, 100]], 8],
  sn: ["bg-[#101315] border-[#101315]", "bg-[#10181d]", "fill-[#8b8f90]", [[0, 93, 100]], 7],
  strings: ["bg-[#c2bc99]", "bg-[#626960]", "fill-[#e2e2d2]", stringNotes, 6],
  stringsIntro: ["bg-[#c2bc99]", "bg-[#626960]", "fill-[#d6d6c4]", stringIntro, 6],
} as const;

const run = (look: Clip["look"], from: number, to: number, step: number, icon = true): Clip[] => {
  const out: Clip[] = [];
  for (let b = from; b < to; b += step) out.push({ look, from: b, to: Math.min(b + step, to), icon });
  return out;
};
const one = (look: Clip["look"], from: number, to: number, label?: string, icon = true): Clip => ({ look, from, to, label, icon });

type Auto = { from: number; to: number; label?: string; bg: string; line?: string };
type Track = {
  name: string;
  height: string;
  bg: string;
  text: string;
  kind?: "note" | "link";
  arrow?: boolean;
  nested?: boolean;
  clips?: Clip[];
  auto?: Auto[];
};

const rose = "bg-[#7c4e66]";
const brick = "bg-[#7a4a4f]";
const violet = "bg-[#5f4a7b]";
const teal = "bg-[#4b7d7b]";

const small = (name: string, label: string, bg: string, to = 259, line = "0,9 258,9", nested = false): Track => ({
  name,
  height: "h-4",
  bg,
  text: "text-[#e6dfe2]",
  nested,
  auto: [{ from: 1, to, label, bg, line }],
});

const tracks: Track[] = [
  {
    name: "Sub", height: "h-[38px]", bg: "bg-[#6e6139]", text: "text-[#e1dac3]", kind: "note",
    clips: [...run("sub", 1, 65, 4), ...run("subDark", 65, 73, 2), ...run("sub", 73, 121, 4), ...run("subDark", 121, 161, 2), ...run("sub", 161, 209, 4), ...run("subDark", 209, 257, 2)],
  },
  {
    name: "Paino", height: "h-[38px]", bg: "bg-[#c9c485]", text: "text-[#4a4730]", kind: "note", arrow: true,
    clips: [
      one("piano", 17, 24), one("piano", 25, 33), one("piano", 33, 40), one("piano", 41, 49), one("piano", 49, 56), one("piano", 57, 65), one("piano", 65, 73),
      one("piano", 73, 89, "Paino"), one("piano", 89, 105, "Paino"), one("piano", 105, 121, "Paino"),
      one("piano", 152, 161, "Pi..2"), one("piano", 161, 169), one("piano", 169, 177), one("piano", 177, 193, "Paino"), one("piano", 193, 209, "Paino"),
    ],
  },
  small("Delay 2..volume", "Delay 2 - Piano - Input volume", rose, 261, "40,7 48,5 64,7 64,12 72,12 72,7 88,7 89,11 89,7 96,7 97,11 97,7 104,7 105,11 105,7 112,7 113,11 113,6 152,6 152,9 160,9 160,6 258,6", true),
  { name: "Dan...tar", height: "h-[34px]", bg: "bg-[#bab365]", text: "text-[#fbfae9]", kind: "link", arrow: true, clips: run("guitar", 33, 65, 4) },
  small("Dance..l volume", "Dance Guitar - Channel volume", brick, 259, "48,5 61,5 64,11 258,8", true),
  {
    name: "Pad Culmination", height: "h-[38px]", bg: "bg-[#d0c9b4]", text: "text-[#6a6453]", kind: "link", arrow: true,
    clips: [one("pad", 33, 41), one("pad", 41, 49), one("pad", 49, 57), one("pad", 57, 61), one("pad", 61, 70, "P...2"), ...run("padLate", 73, 121, 8), ...run("padLate", 161, 209, 8)],
  },
  small("Pad 1 - mstCut", "Pad 1 - mstCut", rose, 259, "28,5 62,5 69,10 70,8 71,12 73,5 120,5 120,8 258,7", true),
  {
    name: "Acid Pad Culminati..", height: "h-[42px]", bg: "bg-[#b9a684]", text: "text-[#fbf8f1]", kind: "link",
    clips: [...run("acidSoft", 49, 65, 8), one("acidPickup", 71, 73, undefined, false), ...run("acid", 73, 121, 8), ...run("acid", 177, 209, 8)],
  },
  {
    name: "Acid Pad - flt1_cut", height: "h-4", bg: violet, text: "text-[#e3dcec]",
    auto: [
      { from: 1, to: 73, label: "Acid Pad - flt1_cut", bg: violet, line: "30,4 48,4 49,11 50,6 51,11 52,6 53,11 54,5 55,11 56,5 57,11 58,5 59,11 60,5 61,11 62,5 64,12 68,12 71,5 72,10" },
      ...[73, 81, 89, 97, 105, 113, 177, 185, 193, 201].map((b) => ({ from: b, to: b + 8, label: "", bg: violet, line: "3,12 4,6 5,11 6,4 7,11" })),
      { from: 209, to: 258, label: "Acid Pad - flt1_cut", bg: violet, line: "28,8 48,6" },
    ],
  },
  { name: "Pluck ARP", height: "h-[44px]", bg: "bg-[#ae984c]", text: "text-[#fbf8f1]", kind: "link", arrow: true, clips: [...run("pluck", 89, 121, 8), ...run("pluck", 177, 209, 8)] },
  small("Pluck AR..lt1_cut", "Pluck ARP - flt1_cut", violet, 259, "28,9 88,11 92,5 96,11 100,5 104,11 108,5 112,11 116,5 120,10 176,11 180,7 184,11 188,6 192,11 197,6 201,11 208,6 209,9 258,8", true),
  {
    name: "Lead", height: "h-[42px]", bg: "bg-[#c0ab82]", text: "text-[#fbf8f1]", kind: "link",
    clips: [one("lead", 105, 120, undefined, false), one("lead", 193, 208, undefined, false), one("leadDark", 225, 257, undefined, false)],
  },
  small("Lead - C..l volume", "Lead - Channel volume", brick, 259, "0,5 160,4 224,9 230,5 258,5"),
  { name: "Lead #2", height: "h-7", bg: "bg-[#c0ab82]", text: "text-[#fbf8f1]", kind: "link", clips: [one("leadFull", 225, 257, undefined, false)] },
  small("Lead #2..l volume", "Lead #2 - Channel volume", brick, 259, "0,7 160,7 222,11 240,6 258,6"),
  {
    name: "Kick Main", height: "h-[44px]", bg: "bg-[#040506]", text: "text-[#8b8f92]", kind: "link",
    clips: [
      one("kick", 65, 73), one("kick", 73, 89, "Kick Main"), one("kick", 89, 105, "Kick Main"), one("kick", 105, 120, "Kick Main"),
      ...run("kick", 121, 161, 4).map((c) => ({ ...c, icon: ![137, 145, 153].includes(c.from) })),
      one("kick", 161, 177, "Kick Main"), one("kick", 177, 193, "Kick Main"), one("kick", 193, 208, "Kick Main"),
      ...run("kick", 209, 241, 4), ...run("kick", 241, 257, 4, false),
    ],
  },
  {
    name: "RideHat", height: "h-[38px]", bg: "bg-[#dbdfe2]", text: "text-[#5f666a]", kind: "note",
    clips: [[73, 89], [89, 105], [105, 120], [145, 161], [161, 177], [177, 193], [193, 208], [233, 249]].map(([a, b]) => one("ride", a, b, "RideHat")).concat(one("ride", 249, 257)),
  },
  {
    name: "Hat", height: "h-[38px]", bg: "bg-[#b9bfc4]", text: "text-[#4f5558]", kind: "note",
    clips: [one("hat", 73, 120, undefined, false), one("hat", 148, 208, undefined, false), one("hat", 233, 257, undefined, false)],
  },
  small("Hat - Ch..l volume", "Hat - Channel volume", brick, 259, "0,9 147,9 147,12 150,12 152,9 258,9"),
  {
    name: "SnareClap", height: "h-10", bg: "bg-[#84929a]", text: "text-[#f6f9fa]", kind: "link",
    clips: [one("snare", 105, 120, undefined, false), one("snare", 193, 208, undefined, false)],
  },
  {
    name: "BA", height: "h-[38px]", bg: "bg-[#6e692e]", text: "text-[#d8d39c]", kind: "note",
    clips: [...run("ba", 73, 120, 4), one("baDark", 121, 161, undefined, false), ...run("ba", 161, 208, 4), one("baDark", 209, 257, undefined, false)],
  },
  { name: "SN", height: "h-[38px]", bg: "bg-[#1a1b1c]", text: "text-[#989da0]", kind: "note", arrow: true, clips: [one("sn", 65, 73), one("sn", 153, 161, "SN")] },
  small("SN - Volume", "SN - Volume", teal, 259, "0,5 64,5 64,9 72,5 152,5 152,12 158,5 258,5", true),
  { name: "Crash", height: "h-12", bg: "bg-[#516a5c]", text: "text-[#dfe8e3]", kind: "link", arrow: true },
  small("9.CrashC..volume", "9.CrashClassic2 - Channel volume", brick, 259, "0,6 224,6 232,9 254,9 258,5", true),
  {
    name: "Strings", height: "h-[42px]", bg: "bg-[#c6c09b]", text: "text-[#4a4730]", kind: "link", arrow: true,
    clips: [one("stringsIntro", 145, 169, "Strings"), ...run("strings", 169, 209, 8)],
  },
  small("Strings..l volume", "Strings - Channel volume", brick, 261, "0,5 144,5 162,9 200,9 203,7 205,9 230,9 260,5", true),
  { name: "Track 28", height: "h-4", bg: "bg-[#4a5359]", text: "text-[#6d777c]" },
  { name: "Track 29", height: "h-[38px]", bg: "bg-[#4a5359]", text: "text-[#6d777c]" },
  { name: "Track 30", height: "h-[38px]", bg: "bg-[#4a5359]", text: "text-[#6d777c]" },
];

const crashes: [number, number][] = [[73, 1], [89, 1], [105, 1], [120, 1], [160, 2], [177, 1], [193, 1], [208, 1], [241, 1], [249, 9]];
const markers: [number, string][] = [
  [1, "Intro"], [65, "Uplift"], [73, "Culmination\\"], [121, "Bassline"], [153, "Uplift"],
  [161, "Culmination 2 + Strings"], [209, "Bassline Outro"], [249, "Uplift"], [257, "End"],
];

/* ---------- playlist ---------- */

const iconTint = (look: Clip["look"]) => {
  if (look === "subDark") return "scale-75 text-[#a59b68]/50";
  if (look === "kick" || look === "sn") return "text-[#b5b8ba]";
  if (look === "ba") return "text-[#f1eeb0]";
  return "text-white";
};

const labelTint = (look: Clip["look"]) => {
  if (look === "kick") return "text-[#9b9fa1]";
  if (look === "sn") return "text-[#34383b]";
  return "text-[#5d5a48]";
};

const ClipBox = ({ clip }: { clip: Clip }) => {
  const [head, body, note, notes, thick] = looks[clip.look];
  return (
    <div
      className="absolute inset-y-0 flex flex-col overflow-hidden"
      style={{ left: pct(clip.from - 1), width: pct(clip.to - clip.from) }}
    >
      <div
        className={`flex items-center whitespace-nowrap rounded-[1px] text-[12px] leading-[14px] ${
          body ? "h-[15px] shrink-0" : "flex-1"
        } ${clip.icon ? "border border-black/30 border-t-white/20 pl-[2px]" : ""} ${head}`}
      >
        {clip.icon && <PatternIcon className={iconTint(clip.look)} />}
        {clip.label && <span className={`ml-[3px] ${labelTint(clip.look)}`}>{clip.label}</span>}
      </div>
      {body && (
        <svg viewBox="0 0 100 100" preserveAspectRatio="none" className={`min-h-0 w-full flex-1 ${body} ${note}`}>
          {(notes as readonly Note[]).map(([x, y, w], i) => <rect key={i} x={x} y={y} width={w} height={thick} />)}
          <path d="M100 0v100" stroke="#000" strokeOpacity=".25" strokeWidth="1" vectorEffect="non-scaling-stroke" />
        </svg>
      )}
    </div>
  );
};

const AutoBox = ({ auto }: { auto: Auto }) => (
  <div
    className={`absolute inset-y-0 flex items-center overflow-hidden whitespace-nowrap rounded-[1px] border-r border-black/30 bg-gradient-to-b from-white/10 to-transparent text-[13px] leading-[14px] text-[#dccdd3] ${auto.bg}`}
    style={{ left: pct(auto.from - 1), width: pct(auto.to - auto.from) }}
  >
    <svg viewBox={`0 0 ${auto.to - auto.from} 15`} preserveAspectRatio="none" className="absolute inset-0 h-full w-full">
      <polyline points={auto.line} fill="none" stroke="#fff" strokeOpacity=".2" vectorEffect="non-scaling-stroke" />
    </svg>
    <LinkDots className="relative -mx-[2px] scale-75" />
    <span className="relative">{auto.label}</span>
  </div>
);

const TrackHead = ({ track }: { track: Track }) => {
  const isSmall = track.height === "h-4";
  const inline = isSmall || track.name === "Lead #2" || track.name === "Dan...tar";
  const long = track.name.length > 16;
  const nameSize = track.name === "Track 28" ? "text-[13px]" : isSmall ? "text-[11px]" : long ? "text-[12px] leading-4" : "text-[14px] leading-4";
  return (
    <div className={`flex shrink-0 ${track.height} ${track.nested ? "pl-[6px]" : ""}`}>
      <div
        className={`relative flex min-w-0 flex-1 whitespace-nowrap rounded-r-[5px] border-b border-black/20 bg-gradient-to-b from-white/5 to-black/5 pl-[2px] ${
          inline ? "items-center" : "flex-col justify-between"
        } ${track.bg} ${track.text}`}
      >
        <span className={nameSize}>{track.name}</span>
        <span className={`ml-auto flex items-center pr-[6px] ${inline ? "gap-1" : "gap-[7px] pb-1"}`}>
          {track.kind === "note" && <NoteIcon />}
          {track.kind === "link" && <LinkDots />}
          {track.arrow && <svg viewBox="0 0 8 5" className="h-[5px] w-2" fill="currentColor"><path d="M0 5l4-5 4 5z" /></svg>}
          <Led />
        </span>
        {!isSmall && track.name !== "Lead #2" && (
          <span className="absolute bottom-[2px] left-[14px] flex gap-[2px] opacity-40">
            {[0, 1, 2].map((i) => <i key={i} className="h-[2px] w-[2px] bg-current" />)}
          </span>
        )}
      </div>
    </div>
  );
};

const Overview = () => (
  <svg viewBox="0 0 1068 18" preserveAspectRatio="none" className="h-[18px] w-full bg-[#4d5b63]">
    <rect width="1012" height="18" fill="#87658a" />
    <rect y="12" width="1012" height="1" fill="#4a6a78" />
    <rect y="14" width="1020" height="4" fill="#817779" />
    <rect width="480" height="2" fill="#efe3a8" />
    <rect x="125" y="2" width="130" height="2" fill="#e8dcc0" />
    <rect x="255" y="9" width="28" height="4" fill="#4a3f48" />
    <rect x="282" y="1" width="192" height="3" fill="#f7ecb4" />
    <rect x="345" y="4" width="125" height="3" fill="#d9b3a4" />
    <rect x="408" y="7" width="60" height="5" fill="#d5b993" />
    <path d="M282 12h188" stroke="#e6e6e2" strokeWidth="2" strokeDasharray="2 1" />
    <rect x="474" y="0" width="156" height="4" fill="#8e6b70" />
    <rect x="630" y="1" width="190" height="3" fill="#f7ecb4" />
    <rect x="692" y="4" width="125" height="3" fill="#dcb8b0" />
    <rect x="755" y="7" width="62" height="5" fill="#d5b993" />
    <path d="M565 12h252M880 10h127" stroke="#e6e6e2" strokeWidth="2" strokeDasharray="2 1" />
    <path d="M470 0h8l-5 5zM598 0h6l-4 5zM818 0h6l-4 6zM976 0h6l-4 5zM1006 0h6l-4 5z" fill="#f0df9c" />
    <rect x="565" y="15" width="252" height="3" fill="#bcc1a8" />
  </svg>
);

const Ruler = () => (
  <div className="relative h-[39px] overflow-hidden bg-gradient-to-b from-[#1b252b] to-[#22323b]">
    {Array.from({ length: 34 }, (_, i) => i * 8).map((b) => (
      <span key={b} className="absolute top-[6px] text-[12px] leading-[14px] text-[#a4b1b8]" style={{ left: pct(b) }}>{b + 1}</span>
    ))}
    {markers.map(([b, name]) => (
      <span
        key={b}
        className="absolute bottom-0 whitespace-nowrap bg-[#384b57] pb-px pr-4 text-[12px] leading-4 text-[#c9d3d8] [clip-path:polygon(0_0,calc(100%-10px)_0,100%_100%,0_100%)]"
        style={{ left: pct(b - 1) }}
      >
        {name}
      </span>
    ))}
    <svg viewBox="0 0 14 9" className="absolute top-[3px] -ml-[7px] h-[9px] w-[14px]" style={{ left: pct(20) }}>
      <path d="M0 0h14v3l-7 6-7-6z" fill="#9ad24f" />
    </svg>
  </div>
);

const Grid = () => (
  <div className="relative min-w-0 flex-1 overflow-hidden border-l border-[#1a262d] bg-[#31424d]">
    <div className="absolute inset-0 flex">
      {Array.from({ length: 68 }, (_, i) => (
        <i key={i} className={`shrink-0 border-r border-[#172833] ${i % 8 < 4 ? "bg-[#32444f]" : "bg-[#2c3d49]"}`} style={{ width: pct(4) }} />
      ))}
    </div>
    {tracks.map((t) => (
      <div key={t.name} className={`relative border-b-2 border-[#16242d] ${t.height}`}>
        {t.clips?.map((c, i) => <ClipBox key={i} clip={c} />)}
        {t.auto?.map((a, i) => <AutoBox key={i} auto={a} />)}
        {t.name === "Crash" &&
          crashes.map(([b, w]) => (
            <svg key={b} viewBox="0 0 10 46" preserveAspectRatio="none" className="absolute inset-y-0 h-full" style={{ left: pct(b - 1), width: pct(w) }}>
              <rect width={w === 1 ? 4 : 10} height="15" fill="#55705f" />
              <path d={w === 1 ? "M0 16h3l6 15-6 15H0z" : "M0 16h9.500l.5 15-.5 15H0z"} fill="#b0cabd" />
            </svg>
          ))}
      </div>
    ))}
    <i className="absolute inset-y-0 w-px bg-white/30" style={{ left: pct(20) }} />
    <a href="#home" className="absolute bottom-[17px] right-0 font-['Open_Sans',sans-serif] text-[22px] font-bold leading-7 text-white">
      www.flpdown.com
    </a>
  </div>
);

const Playlist = () => (
  <section className="flex min-w-0 flex-1 flex-col border-r-2 border-[#39434a] bg-[#424c52] pl-1">
    <header className="flex h-7 shrink-0 items-center text-[#d6dde0]">
      <svg viewBox="0 0 4 8" className="ml-[10px] h-2 w-1" fill="currentColor"><path d="M0 0l4 4-4 4z" /></svg>
      <Magnet className="ml-3 h-[14px] w-[13px] text-[#6fe0a0]" />
      <div className="ml-[17px] flex items-center gap-[3px]">
        <svg viewBox="0 0 18 16" className="h-4 w-[18px]" fill="none" stroke="#f0b040" strokeWidth="1.800"><path d="M3 2l5 1 8 8-1 4-4 0-8-8zM7 4l7 8" /></svg>
        <svg viewBox="0 0 18 16" className="h-4 w-[18px]" fill="currentColor"><path d="M2 14V8l4-7 5 4 1 5 5 4-2 2-6-4-3-3z" /></svg>
        <Ban size={16} className="mx-px rotate-90" />
        <SpeakerSolid extra="M11 5l5 6M16 5l-5 6" />
        <svg viewBox="0 0 18 16" className="h-4 w-[18px]" fill="currentColor"><path d="M0 8l6-5v3h2v4H6v3zM18 8l-6-5v3h-2v4h2v3z" /></svg>
        <svg viewBox="0 0 18 16" className="h-4 w-[18px]" fill="currentColor"><path d="M1 2h7v9zM9 2h6v11l-5 2z" /></svg>
        <Maximize size={16} className="mx-px" />
        <Search size={16} className="mx-px" />
        <SpeakerSolid extra="M12 2v12M15.500 2v12" />
      </div>
      <Speaker className="ml-4" />
      <h1 className="ml-[2px] flex items-center gap-[6px] text-[14px]">
        播放列表 - 编曲
        <svg viewBox="0 0 4 8" className="h-2 w-1" fill="#7b868b"><path d="M0 0l4 4-4 4z" /></svg>
        <span className="text-[16px]">Organ &amp; Sub</span>
        <svg viewBox="0 0 4 8" className="h-2 w-1" fill="#7b868b"><path d="M0 0l4 4-4 4z" /></svg>
      </h1>
      <svg viewBox="0 0 48 10" className="ml-auto mr-[7px] h-[10px] w-12" fill="none" stroke="currentColor" strokeWidth="1.800">
        <path d="M1 2h7M19 1h8v8h-8zM19 2.500h8M38 1l8 8M46 1l-8 8" />
      </svg>
    </header>
    <div className="flex min-h-0 flex-1 pr-1">
      <Picker />
      <div className="ml-[7px] flex min-w-0 flex-1 flex-col pb-[7px]">
        <div className="flex h-[58px] shrink-0">
          <div className="flex w-[111px] shrink-0 bg-[#535d64] text-[#6f797f] [clip-path:polygon(18px_0,100%_0,100%_100%,0_100%,2px_46px)]">
            <button className="w-[31px] border-r border-[#39434a] pl-[3px] pt-7 text-[18px] font-bold leading-5 text-[#e6ebed]">+</button>
            <div className="flex flex-1 flex-col justify-between px-[5px] pb-1 pt-[2px]">
              <div className="flex items-center justify-between">
                <Wave className="h-3 w-[18px]" />
                <LinkDots />
                <Piano className="h-[11px] w-[15px] text-[#e6ebed]" />
              </div>
              <div className="flex justify-between text-[8px] leading-[10px]">
                <span>音频</span><span>自动</span><span className="text-[#e6ebed]">样式</span>
              </div>
            </div>
          </div>
          <div className="min-w-0 flex-1">
            <div className="flex h-[19px]">
              <div className="flex w-5"><ScrollButton label="Left"><ChevronLeft size={13} /></ScrollButton></div>
              <div className="min-w-0 flex-1 pt-px"><Overview /></div>
              <div className="ml-[21px] flex w-5"><ScrollButton label="Right"><ChevronRight size={13} /></ScrollButton></div>
            </div>
            <Ruler />
          </div>
          <div className="flex w-5 shrink-0 flex-col">
            <div className="flex h-[19px]"><ScrollButton label="Options"><Dot /></ScrollButton></div>
            <div className="flex h-5"><ScrollButton label="Up"><ChevronUp size={13} /></ScrollButton></div>
            <div className="flex-1 border border-b-0 border-[#606b71] bg-[#535d64]" />
          </div>
        </div>
        <div className="flex min-h-0 flex-1 overflow-hidden border-b border-[#232b30]">
          <div className="w-[100px] shrink-0 overflow-hidden bg-[#2c3439]">
            {tracks.map((t) => <TrackHead key={t.name} track={t} />)}
          </div>
          <div className="w-[10px] shrink-0 border-r border-[#1a262d] bg-[#2b3a44]" />
          <Grid />
          <div className="flex w-5 shrink-0 flex-col bg-[#383f47]">
            <div className="h-[15px] border border-t-0 border-[#606b71] bg-[#535d64]" />
            <div className="mt-auto flex h-[19px]"><ScrollButton label="Down"><ChevronDown size={13} /></ScrollButton></div>
          </div>
        </div>
      </div>
    </div>
  </section>
);

export default function App() {
  return (
    <main className="flex h-screen flex-col overflow-hidden bg-[#5b646b] font-['Roboto_Condensed','Liberation_Sans_Narrow','Open_Sans','Noto_Sans_CJK_SC',sans-serif]">
      <div className="shrink-0 border-t border-[#465056]">
        <TopRow />
        <SecondRow />
      </div>
      <div className="flex min-h-0 flex-1">
        <ChannelRack />
        <Playlist />
      </div>
    </main>
  );
}
